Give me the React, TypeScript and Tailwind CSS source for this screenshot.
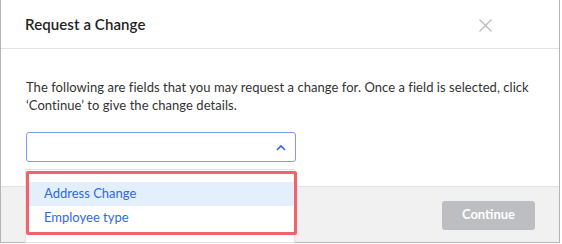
import React from "react";

export default function App() {
  return (
    <div className="relative w-[562px] h-[244px] bg-white overflow-hidden" style={{ fontFamily: "Lato, 'Open Sans', sans-serif" }}>
      <div className="absolute left-0 top-0 w-[560px] h-[243px] border-l border-r border-b border-[#b5b5b5] flex flex-col bg-white">
        <div className="h-[49px] shrink-0 flex items-center justify-between pl-[24px] pr-[67px] border-b border-[#e3e3e3]">
          <h1 className="text-[15px] font-semibold text-[#1f1f1f] tracking-[0.1px]">Request a Change</h1>
          <svg width="13" height="13" viewBox="0 0 13 13" className="mt-[2px]">
            <path d="M0.5 0.5 L12.5 12.5 M12.5 0.5 L0.5 12.5" stroke="#b9b9b9" strokeWidth="1.3" />
          </svg>
        </div>
        <div className="flex-1 px-[25px] pt-[30px]">
          <p className="text-[13px] leading-[17.5px] text-[#333] tracking-[0.05px]">
            The following are fields that you may request a change for. Once a field is selected, click ‘Continue’ to give the change details.
          </p>
          <div className="mt-[18px] w-[270px] h-[30px] border border-[#7e9bf0] rounded-[3px] flex items-center justify-end pr-[9px]">
            <svg width="10" height="7" viewBox="0 0 10 7">
              <path d="M1 6 L5 2 L9 6" fill="none" stroke="#2d62e6" strokeWidth="1.6" />
            </svg>
          </div>
        </div>
        <div className="h-[56px] shrink-0 bg-[#f1f1f1] border-t border-[#e0e0e0] flex items-center justify-end pr-[24px]">
          <button className="w-[93px] h-[29px] rounded-[3px] bg-[#bcbec1] text-white text-[13px] font-bold mt-[1px]">Continue</button>
        </div>
      </div>
      <div className="absolute left-[25px] top-[169px] w-[270px] h-[74px] bg-white border border-[#e3e3e3] pt-[12px]">
        <div className="h-[24px] bg-[#e3effd] flex items-center pl-[18px] text-[13px] text-[#2f6ae0]">Address Change</div>
        <div className="h-[24px] flex items-center pl-[18px] text-[13px] text-[#2f6ae0]">Employee type</div>
      </div>
      <div className="absolute left-[26px] top-[171px] w-[271px] h-[64px] border-[3px] border-[#f4616b] rounded-[2px]" />
    </div>
  );
}
